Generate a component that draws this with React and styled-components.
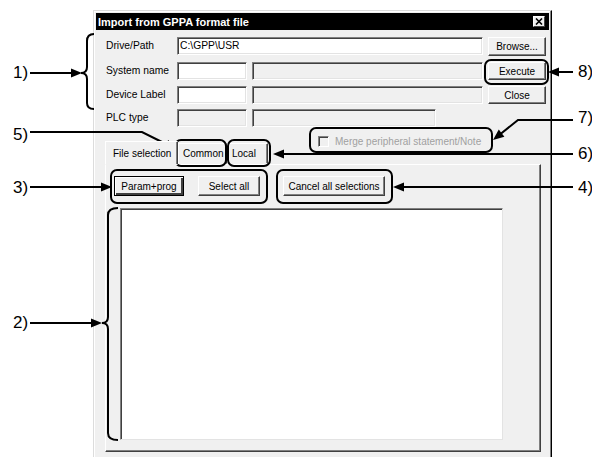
import React from "react";
import styled, { createGlobalStyle } from "styled-components";

const GlobalStyle = createGlobalStyle`
  html, body { margin: 0; padding: 0; background: #fff; }
  body { font-family: "Liberation Sans", Arial, sans-serif; }
`;

const Page = styled.div`
  position: relative;
  width: 592px;
  height: 457px;
  overflow: hidden;
  background: #fff;
`;

const Dialog = styled.div`
  box-sizing: border-box;
  width: 459px;
  height: 470px;
  margin: 10px 0 0 93px;
  padding: 2px;
  background: #f0f0f0;
  border: 1px solid;
  border-color: #dcdcdc #000 #000 #dcdcdc;
  box-shadow: inset -1px -1px 0 #808080, inset 1px 1px 0 #fff;
  font-size: 10.3px;
  color: #000;
`;

const TitleBar = styled.div`
  display: flex;
  align-items: center;
  justify-content: space-between;
  height: 17px;
  padding: 0 4px 0 2px;
  background: #000;
  color: #fff;
  font-weight: bold;
  font-size: 11px;
`;

const CloseBox = styled.div`
  box-sizing: border-box;
  width: 12px;
  height: 11px;
  display: flex;
  align-items: center;
  justify-content: center;
  background: #f0f0f0;
  border: 1px solid;
  border-color: #fff #404040 #404040 #fff;
`;

const FormGrid = styled.div`
  display: grid;
  grid-template-columns: 66px 70px 231px 58px;
  grid-template-rows: 20px 19px 18px 18px;
  column-gap: 5px;
  row-gap: 5px;
  margin: 7px 2px 0 10px;
`;

const Label = styled.span`
  align-self: start;
  line-height: 18px;
  white-space: nowrap;
`;

const Field = styled.div`
  box-sizing: border-box;
  grid-column: ${(p) => p.$span || "auto"};
  width: ${(p) => (p.$width ? `${p.$width}px` : "auto")};
  height: 18px;
  padding: 0 2px;
  line-height: 16px;
  background: ${(p) => (p.$disabled ? "#f0f0f0" : "#fff")};
  border: 1px solid;
  border-color: #808080 #fff #fff #808080;
  box-shadow: inset 1px 1px 0 #404040, inset -1px -1px 0 #e3e3e3;
  white-space: nowrap;
`;

const Button = styled.button`
  box-sizing: border-box;
  width: ${(p) => p.$width}px;
  height: ${(p) => p.$height || 18}px;
  padding: 0;
  font-family: inherit;
  font-size: 10px;
  color: #000;
  background: #f0f0f0;
  border: 1px solid;
  border-color: ${(p) => (p.$default ? "#000" : "#fff #404040 #404040 #fff")};
  box-shadow: ${(p) =>
    p.$default
      ? "inset 1px 1px 0 #fff, inset -2px -2px 0 #404040, inset -1px -1px 0 #808080"
      : "inset -1px -1px 0 #808080"};
  white-space: nowrap;
`;

const TabHeader = styled.div`
  display: flex;
  align-items: flex-end;
  height: 29px;
  margin-top: 8px;
  padding-left: 9px;
  font-size: 10px;
`;

const Tab = styled.div`
  position: relative;
  z-index: ${(p) => (p.$active ? 1 : 0)};
  box-sizing: border-box;
  display: flex;
  align-items: center;
  width: ${(p) => p.$width}px;
  height: ${(p) => (p.$active ? 24 : 21)}px;
  margin-bottom: ${(p) => (p.$active ? -1 : 0)}px;
  padding: 0 0 0 ${(p) => (p.$active ? 7 : 4)}px;
  background: #f0f0f0;
  border: 1px solid;
  border-color: #fff #404040 transparent #fff;
  box-shadow: inset -1px 0 0 #808080;
  white-space: nowrap;
  overflow: hidden;
`;

const CheckOption = styled.div`
  align-self: flex-start;
  display: flex;
  align-items: center;
  gap: 6px;
  margin: 1px 0 0 50px;
  color: #a0a0a0;
  white-space: nowrap;
`;

const CheckBox = styled.span`
  box-sizing: border-box;
  width: 11px;
  height: 11px;
  background: #f0f0f0;
  border: 1px solid;
  border-color: #808080 #fff #fff #808080;
  box-shadow: inset 1px 1px 0 #404040;
`;

const Panel = styled.div`
  box-sizing: border-box;
  width: 436px;
  height: 288px;
  margin-left: 9px;
  padding: 11px 0 0 8px;
  border: 1px solid;
  border-color: #fff #404040 #404040 #fff;
  box-shadow: inset -1px -1px 0 #808080;
`;

const ButtonRow = styled.div`
  display: flex;
  align-items: center;
  gap: ${(p) => p.$gap}px;
`;

const ButtonGroup = styled.div`
  display: flex;
  gap: 14px;
`;

const ListBox = styled.div`
  box-sizing: border-box;
  width: 383px;
  height: 232px;
  margin: 12px 0 0 6px;
  background: #fff;
  border: 1px solid;
  border-color: #808080 #e3e3e3 #e3e3e3 #808080;
  box-shadow: inset 1px 1px 0 #404040;
`;

const Overlay = styled.svg`
  position: absolute;
  left: 0;
  top: 0;
  pointer-events: none;
`;

const Callout = styled.span`
  position: absolute;
  left: ${(p) => p.$x}px;
  top: ${(p) => p.$y - 10}px;
  font-size: 17px;
  line-height: 20px;
  color: #000;
  white-space: nowrap;
`;

const head = (tx, ty, fx, fy) => {
  const dx = tx - fx;
  const dy = ty - fy;
  const len = Math.hypot(dx, dy);
  const ux = dx / len;
  const uy = dy / len;
  const bx = tx - ux * 11;
  const by = ty - uy * 11;
  const w = 4.5;
  return `${tx},${ty} ${bx - uy * w},${by + ux * w} ${bx + uy * w},${by - ux * w}`;
};

const leaders = [
  { d: "M30 73 L76 73", tip: [82, 73, 30, 73] },
  { d: "M30 323 L96 323", tip: [102, 323, 30, 323] },
  { d: "M30 187 L106 187", tip: [112, 187, 30, 187] },
  { d: "M30 132 L142 132 L170 146", tip: [176, 149, 142, 132] },
  { d: "M573 72 L554 72", tip: [548, 72, 573, 72] },
  { d: "M573 120 L518 120 L498 136", tip: [493, 140, 518, 120] },
  { d: "M573 154 L280 154", tip: [273, 154, 573, 154] },
  { d: "M573 187 L400 187", tip: [393, 187, 573, 187] },
];

const braces = [
  "M94 34 Q87 34 87 41 L87 67 Q87 73 81 73 Q87 73 87 79 L87 103 Q87 109 94 109",
  "M118 208 Q108 208 108 215 L108 317 Q108 323 102 323 Q108 323 108 329 L108 433 Q108 440 118 440",
];

const frames = [
  [485, 60, 63, 24],
  [175, 140, 51, 26],
  [228, 140, 42, 26],
  [310, 128, 182, 24],
  [111, 170, 156, 33],
  [277, 170, 115, 33],
];

const labels = [
  ["1)", 13, 73],
  ["5)", 13, 135],
  ["3)", 13, 188],
  ["2)", 13, 323],
  ["8)", 578, 72],
  ["7)", 578, 118],
  ["6)", 578, 154],
  ["4)", 578, 188],
];

function Annotations() {
  return (
    <>
      <Overlay width="592" height="457" viewBox="0 0 592 457">
        {leaders.map((l, i) => (
          <g key={i}>
            <path d={l.d} fill="none" stroke="#000" strokeWidth="2" />
            <polygon points={head(...l.tip)} fill="#000" />
          </g>
        ))}
        {braces.map((d, i) => (
          <path key={i} d={d} fill="none" stroke="#000" strokeWidth="2" />
        ))}
        {frames.map(([x, y, w, h], i) => (
          <rect key={i} x={x} y={y} width={w} height={h} rx="6" fill="none" stroke="#000" strokeWidth="2" />
        ))}
      </Overlay>
      {labels.map(([t, x, y]) => (
        <Callout key={t} $x={x} $y={y}>{t}</Callout>
      ))}
    </>
  );
}

export default function App() {
  return (
    <Page>
      <GlobalStyle />
      <Dialog>
        <TitleBar>
          <span>Import from GPPA format file</span>
          <CloseBox>
            <svg width="8" height="7" viewBox="0 0 8 7">
              <path d="M1 0.5 L7 6.5 M7 0.5 L1 6.5" stroke="#000" strokeWidth="1.6" />
            </svg>
          </CloseBox>
        </TitleBar>

        <FormGrid>
          <Label>Drive/Path</Label>
          <Field $span="2 / 4">C:\GPP\USR</Field>
          <Button $width={58} $height={19}>Browse...</Button>

          <Label>System name</Label>
          <Field />
          <Field $disabled />
          <Button $width={58}>Execute</Button>

          <Label>Device Label</Label>
          <Field />
          <Field $disabled />
          <Button $width={58}>Close</Button>

          <Label>PLC type</Label>
          <Field $disabled />
          <Field $disabled $width={184} />
        </FormGrid>

        <TabHeader>
          <Tab $active $width={73}>File selection</Tab>
          <Tab $width={49}>Common</Tab>
          <Tab $width={41}>Local</Tab>
          <CheckOption>
            <CheckBox />
            Merge peripheral statement/Note
          </CheckOption>
        </TabHeader>

        <Panel>
          <ButtonRow $gap={23}>
            <ButtonGroup>
              <Button $default $width={70} $height={20}>Param+prog</Button>
              <Button $width={62} $height={20}>Select all</Button>
            </ButtonGroup>
            <Button $width={102} $height={20}>Cancel all selections</Button>
          </ButtonRow>
          <ListBox />
        </Panel>
      </Dialog>
      <Annotations />
    </Page>
  );
}
